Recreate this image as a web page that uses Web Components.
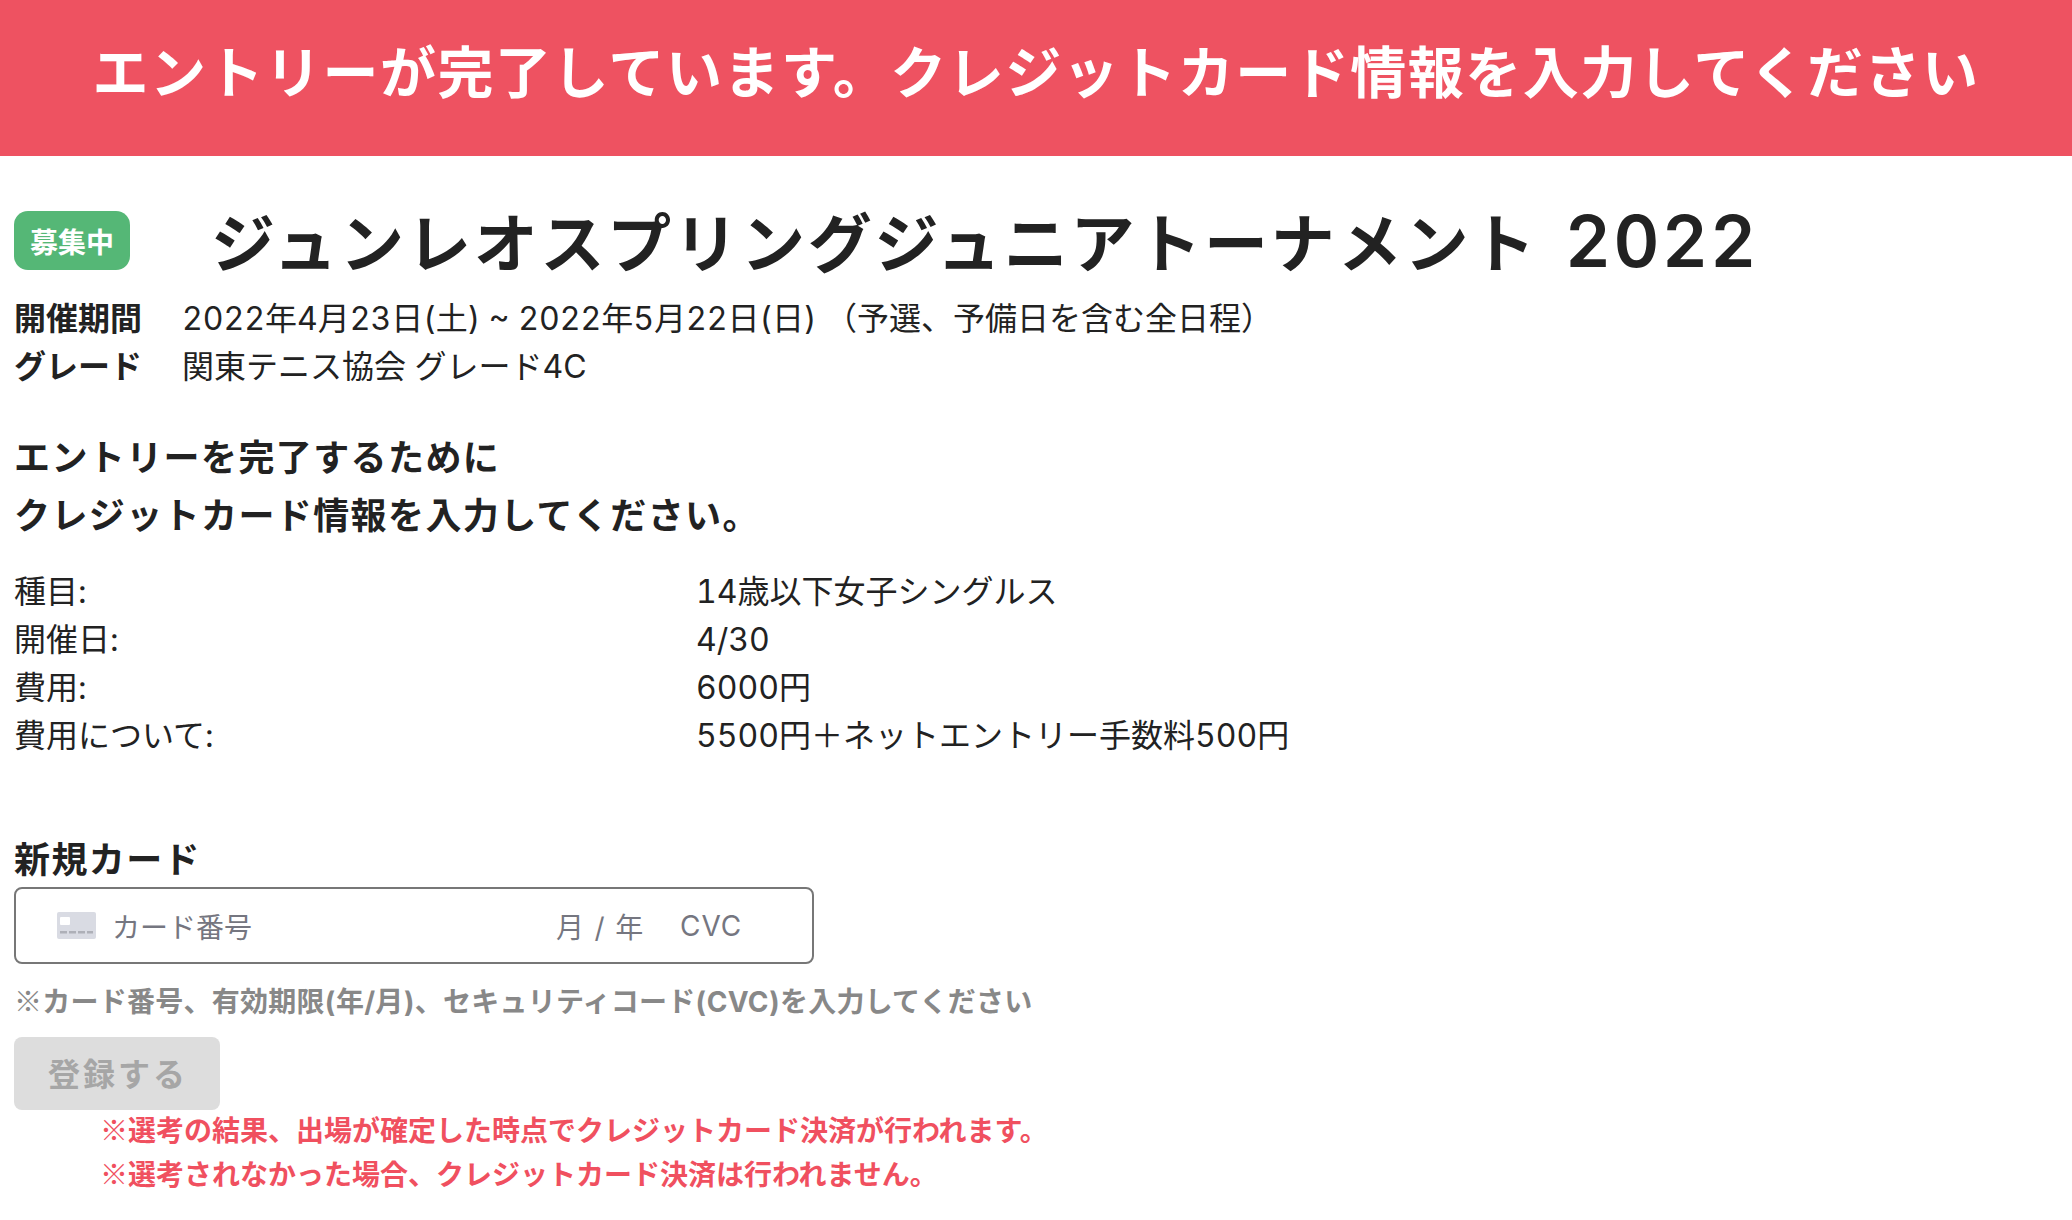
<!DOCTYPE html>
<html lang="ja">
<head>
<meta charset="utf-8">
<title>クレジットカード情報入力</title>
<style>
  html, body { margin: 0; padding: 0; background: #fff; }
  body { font-family: Inter, "Noto Sans CJK JP", sans-serif; font-variant-numeric: tabular-nums; color: #222; }
</style>
</head>
<body>
<entry-page></entry-page>

<script>
const define = (name, css, html) => {
  customElements.define(name, class extends HTMLElement {
    constructor() {
      super();
      this.attachShadow({ mode: "open" });
      const template = document.createElement("template");
      template.innerHTML = `<style>${css}</style>${html}`;
      this.shadowRoot.append(template.content.cloneNode(true));
    }
  });
};

define("top-banner", `
  :host { display: flex; align-items: center; justify-content: center; height: 156px;
    background: #ee5261; color: #fff; font-size: 56px; font-weight: 700; letter-spacing: 1.5px; white-space: nowrap; padding-bottom: 20px; box-sizing: border-box; }
`, `<slot></slot>`);

define("status-badge", `
  :host { display: flex; align-items: center; justify-content: center; width: 116px; height: 59px;
    background: #55b776; color: #fff; font-size: 28px; font-weight: 700; border-radius: 14px; flex: none; }
`, `<slot></slot>`);

define("event-title", `
  :host { display: flex; align-items: center; height: 59px; gap: 81px; }
  h1 { margin: 4px 0 0; font-size: 64px; font-weight: 700; letter-spacing: 2.8px; white-space: nowrap; line-height: 59px; }
  ::slotted(.year) { font-size: 71px; font-weight: 600; letter-spacing: 2.5px; margin-left: 7px; }
`, `<slot name="badge"></slot><h1><slot></slot></h1>`);

define("meta-row", `
  :host { display: grid; grid-template-columns: 168px 1fr; height: 48px; align-items: center; font-size: 32px; line-height: 48px; white-space: nowrap; }
  .label { font-weight: 700; }
`, `<div class="label"><slot name="label"></slot></div><div><slot></slot></div>`);

define("detail-row", `
  :host { display: grid; grid-template-columns: 682px 1fr; height: 48px; align-items: center; font-size: 32px; line-height: 48px; white-space: nowrap; }
`, `<div><slot name="label"></slot></div><div><slot></slot></div>`);

define("card-input", `
  :host { display: flex; align-items: center; width: 800px; height: 77px; box-sizing: border-box;
    border: 2px solid #777; border-radius: 8px; color: #757680; font-size: 28px; padding-left: 41px; white-space: nowrap; }
  svg { width: 39px; height: 27px; flex: none; margin-right: 16px; }
  .number { width: 444px; flex: none; }
  .expiry { width: 124px; flex: none; word-spacing: 3px; }
  .cvc { letter-spacing: 1px; }
`, `
  <svg viewBox="0 0 39 27">
    <rect width="39" height="27" rx="2" fill="#d9dbe3"/>
    <rect x="3" y="5" width="10" height="8" rx="1" fill="#fff"/>
    <rect x="3" y="19" width="7" height="2.5" fill="#aeb0b8"/>
    <rect x="12" y="19" width="7" height="2.5" fill="#aeb0b8"/>
    <rect x="21" y="19" width="7" height="2.5" fill="#aeb0b8"/>
    <rect x="30" y="19" width="6" height="2.5" fill="#aeb0b8"/>
  </svg>
  <span class="number">カード番号</span>
  <span class="expiry">月 / 年</span>
  <span class="cvc">CVC</span>
`);

define("submit-button", `
  :host { display: flex; align-items: center; justify-content: center; width: 206px; height: 73px; box-sizing: border-box; padding: 0 0 3px 2px;
    background: #ddd; color: #a6a6a6; font-size: 32px; font-weight: 700; letter-spacing: 3px; border-radius: 8px; }
`, `<slot></slot>`);

define("entry-page", `
  :host { display: block; }
  main { padding: 55px 14px 0; }
  .meta { margin-top: 25px; }
  h2 { margin: 38px 0 0; font-size: 36px; font-weight: 700; letter-spacing: 1.4px; line-height: 58px; white-space: nowrap; }
  .details { margin-top: 23px; }
  h3 { margin: 76px 0 0; font-size: 36px; font-weight: 700; letter-spacing: 1.4px; line-height: 48px; }
  card-input { margin-top: 3px; }
  .hint { margin: 15px 0 0; font-size: 28px; font-weight: 700; letter-spacing: .25px; color: #888; line-height: 42px; white-space: nowrap; }
  .mark { font-family: "Noto Sans CJK JP", sans-serif; font-weight: 400; }
  submit-button { margin-top: 14px; }
  .notes { margin: -2px 0 0; padding-left: 86px; font-size: 28px; font-weight: 700; color: #f0505f; line-height: 42px; white-space: nowrap; }
`, `
  <top-banner>エントリーが完了しています。クレジットカード情報を入力してください</top-banner>
  <main>
    <event-title>
      <status-badge slot="badge">募集中</status-badge>
      ジュンレオスプリングジュニアトーナメント <span class="year">2022</span>
    </event-title>
    <div class="meta">
      <meta-row><span slot="label">開催期間</span>2022年4月23日(土) ~ 2022年5月22日(日) （予選、予備日を含む全日程）</meta-row>
      <meta-row><span slot="label">グレード</span>関東テニス協会 グレード4C</meta-row>
    </div>
    <h2>エントリーを完了するために<br>クレジットカード情報を入力してください。</h2>
    <div class="details">
      <detail-row><span slot="label">種目:</span>14歳以下女子シングルス</detail-row>
      <detail-row><span slot="label">開催日:</span>4/30</detail-row>
      <detail-row><span slot="label">費用:</span>6000円</detail-row>
      <detail-row><span slot="label">費用について:</span>5500円＋ネットエントリー手数料500円</detail-row>
    </div>
    <h3>新規カード</h3>
    <card-input></card-input>
    <p class="hint"><span class="mark">※</span>カード番号、有効期限(年/月)、セキュリティコード(CVC)を入力してください</p>
    <submit-button>登録する</submit-button>
    <p class="notes"><span class="mark">※</span>選考の結果、出場が確定した時点でクレジットカード決済が行われます。<br><span class="mark">※</span>選考されなかった場合、クレジットカード決済は行われません。</p>
  </main>
`);
</script>
</body>
</html>
